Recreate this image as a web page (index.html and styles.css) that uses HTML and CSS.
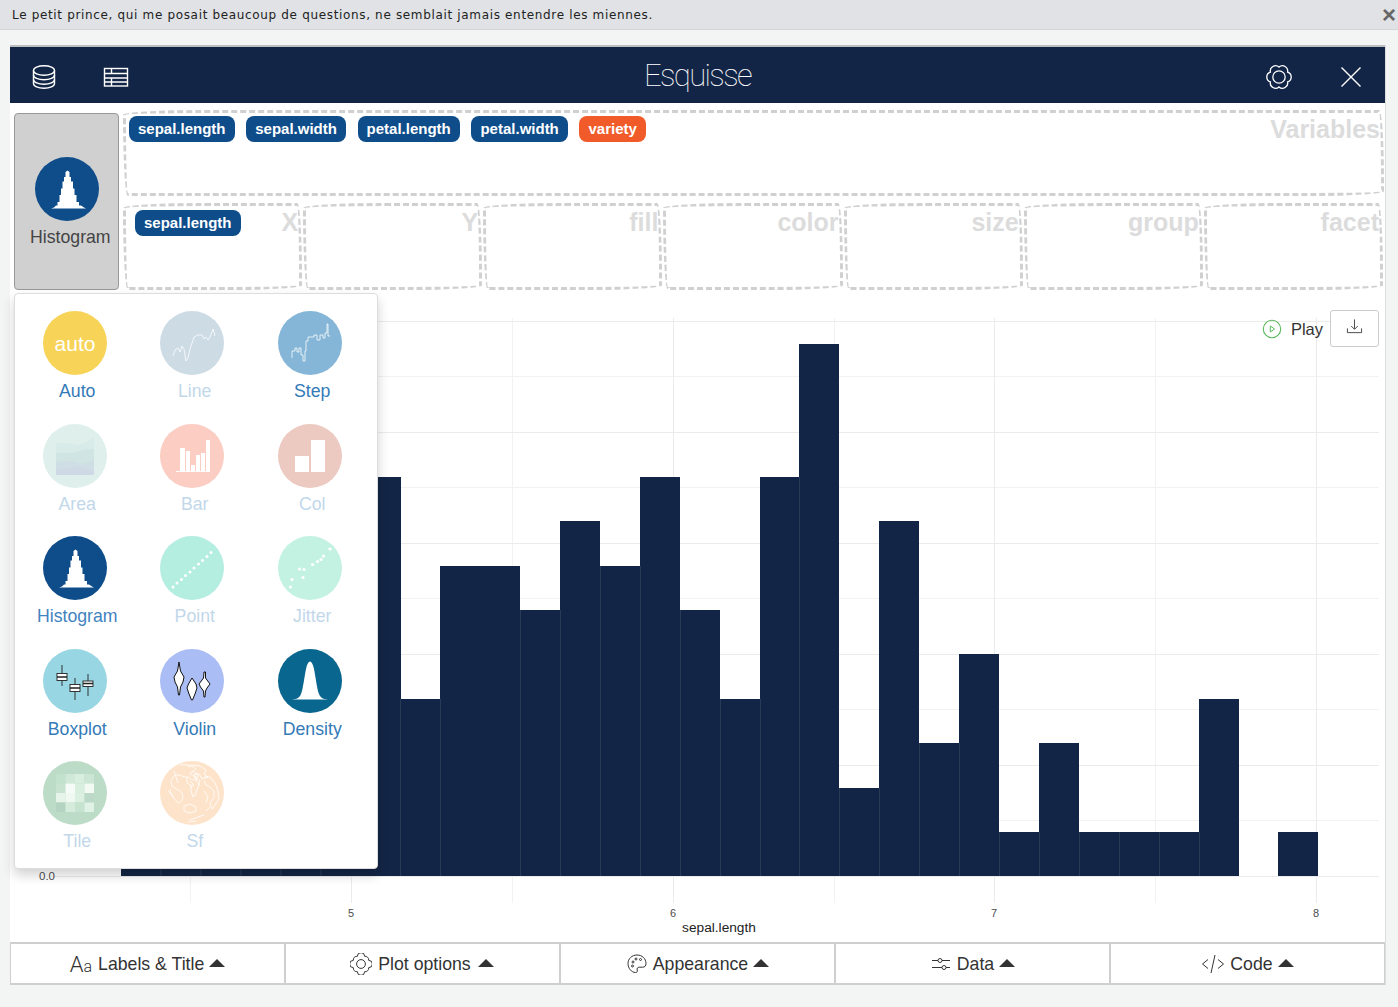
FILE: index.html
```html
<!DOCTYPE html>
<html lang="en">
<head>
<meta charset="utf-8">
<title>Esquisse</title>
<link rel="stylesheet" href="styles.css">
</head>
<body>
<div class="notice"><span class="notice-text">Le petit prince, qui me posait beaucoup de questions, ne semblait jamais entendre les miennes.</span><span class="notice-close">×</span></div>
<main class="frame">
  <header class="topbar">
    <div class="topbar-left">
      <svg class="ticon" viewBox="0 0 26 26"><g fill="none" stroke="#fff" stroke-width="1.4"><ellipse cx="13" cy="6.5" rx="10.5" ry="4.8"/><path d="M2.5 6.5v13c0 2.8 4.7 4.8 10.5 4.8s10.500-2 10.500-4.800v-13"/><path d="M2.500 11c0 2.800 4.700 4.800 10.500 4.800s10.500-2 10.500-4.800"/><path d="M2.500 15.500c0 2.800 4.700 4.800 10.500 4.800s10.500-2 10.500-4.800"/></g></svg>
      <svg class="ticon" viewBox="0 0 26 26"><g fill="none" stroke="#fff" stroke-width="1.400"><rect x="1.500" y="4.500" width="23" height="17.500"/><path d="M1.500 9.500h23M1.500 14h23M8.500 14v8M8.500 4.500v5M1.500 18h23"/></g></svg>
    </div>
    <h1 class="brand">Esquisse</h1>
    <div class="topbar-right">
      <svg class="ticon" viewBox="2.500 2.500 21 21"><g fill="none" stroke="#fff" stroke-width="1.050"><path d="M19.930 9A4.200 4.200 0 0 1 19.930 17A4.200 4.200 0 0 1 13 21A4.200 4.200 0 0 1 6.070 17A4.200 4.200 0 0 1 6.070 9A4.200 4.200 0 0 1 13 5A4.200 4.200 0 0 1 19.930 9Z"/><circle cx="13" cy="13" r="5"/></g></svg>
      <svg class="ticon" viewBox="0 0 26 26"><path d="M3.500 3.500l19 19M22.500 3.500l-19 19" fill="none" stroke="#fff" stroke-width="1.400"/></svg>
    </div>
  </header>

  <section class="drops">
    <button class="geom-btn" type="button">
      <svg class="disc" viewBox="0 0 64 64"><circle cx="32" cy="32" r="32" fill="#0e4c8a"/><path class="white" d="M16 51.500 19 50.500 21 48.500H22.500V45H24.500V38H26V31.500H27.500V24.500H29V20H30.500V15L32.500 13.500 34.500 15V20H36V24.500H38V31.500H39.500V38H41.500V45H44V48.500H46L49 50.500 51 51.500Z"/></svg>
      <span class="geom-btn-label">Histogram</span>
    </button>
    <div class="zones">
      <div class="zone zone-vars">
        <div class="pills">
          <span class="pill">sepal.length</span><span class="pill">sepal.width</span><span class="pill">petal.length</span><span class="pill">petal.width</span><span class="pill pill-orange">variety</span>
        </div>
        <span class="zone-label">Variables</span>
      </div>
      <div class="zone-row">
        <div class="zone zone-first"><div class="pills"><span class="pill">sepal.length</span></div><span class="zone-label">X</span></div>
        <div class="zone"><span class="zone-label">Y</span></div>
        <div class="zone"><span class="zone-label">fill</span></div>
        <div class="zone"><span class="zone-label">color</span></div>
        <div class="zone"><span class="zone-label">size</span></div>
        <div class="zone"><span class="zone-label">group</span></div>
        <div class="zone"><span class="zone-label">facet</span></div>
      </div>
    </div>
  </section>

  <section class="plot">
    <svg class="plot-svg" viewBox="10 292 1375 650">
      <g class="grid-minor"><path d="M52 376.500H1379M52 487.500H1379M52 598.500H1379M52 709.500H1379M52 820.500H1379M190.500 318V903M512.500 318V903M834.500 318V903M1155.500 318V903"/></g>
      <g class="grid-major"><path d="M52 321.500H1379M52 432.500H1379M52 543.500H1379M52 654.500H1379M52 765.500H1379M52 876.500H1379M351.500 318V903M673.500 318V903M994.500 318V903M1316.500 318V903"/></g>
      <g class="bars">
        <rect x="121" y="860" width="240" height="16"/>
        <rect x="360" y="477" width="41" height="399"/>
        <rect x="400" y="699" width="41" height="177"/>
        <rect x="440" y="566" width="80" height="310"/>
        <rect x="520" y="610" width="40" height="266"/>
        <rect x="560" y="521" width="40" height="355"/>
        <rect x="600" y="566" width="40" height="310"/>
        <rect x="640" y="477" width="40" height="399"/>
        <rect x="680" y="610" width="40" height="266"/>
        <rect x="720" y="699" width="40" height="177"/>
        <rect x="760" y="477" width="40" height="399"/>
        <rect x="799" y="344" width="40" height="532"/>
        <rect x="839" y="788" width="41" height="88"/>
        <rect x="879" y="521" width="40" height="355"/>
        <rect x="919" y="743" width="40" height="133"/>
        <rect x="959" y="654" width="40" height="222"/>
        <rect x="999" y="832" width="40" height="44"/>
        <rect x="1039" y="743" width="40" height="133"/>
        <rect x="1079" y="832" width="120" height="44"/>
        <rect x="1199" y="699" width="40" height="177"/>
        <rect x="1278" y="832" width="40" height="44"/>
      </g>
      <path class="bar-seams" d="M161 860V876M201 860V876M241 860V876M281 860V876M321 860V876M400.500 699V876M440.500 699V876M520.500 610V876M560.500 610V876M600.500 566V876M640.500 566V876M680.500 610V876M720.500 699V876M760.500 699V876M799.500 477V876M839.500 788V876M879.500 788V876M919.500 743V876M959.500 743V876M999.500 832V876M1039.500 832V876M1079.500 832V876M1119.500 832V876M1159.500 832V876M1199.500 832V876"/>
      <g class="ticks">
        <text class="tick-y" x="47" y="880" text-anchor="middle">0.0</text>
        <text x="351" y="917" text-anchor="middle">5</text>
        <text x="673" y="917" text-anchor="middle">6</text>
        <text x="994" y="917" text-anchor="middle">7</text>
        <text x="1316" y="917" text-anchor="middle">8</text>
      </g>
      <text class="axis-title" x="719" y="932" text-anchor="middle">sepal.length</text>
    </svg>
    <div class="plot-controls">
      <svg class="play-icon" viewBox="0 0 20 20"><circle cx="10" cy="10" r="8.700" fill="none" stroke="#5cb85c" stroke-width="1.100"/><path d="M8.300 7v6l4.200-3z" fill="none" stroke="#5cb85c" stroke-width="1"/></svg>
      <span class="play-label">Play</span>
      <button class="dl-btn" type="button"><svg class="dl-icon" viewBox="0 0 18 18"><path d="M9 1.500v10M5.500 8.500 9 12l3.500-3.500M1.500 11v4.500h15V11" fill="none" stroke="#444" stroke-width="1"/></svg></button>
    </div>
  </section>

  <nav class="tabs">
    <button class="tab" type="button"><span class="aa"><span class="aa-big">A</span><span class="aa-small">a</span></span>Labels &amp; Title<i class="caret"></i></button>
    <button class="tab" type="button"><svg class="tab-icon tab-icon-gear" viewBox="1 1 20 20"><g fill="none" stroke="#333" stroke-width=".9"><path d="M18 7.700A3.300 3.300 0 0 1 18 14.300A3.300 3.300 0 0 1 14.300 18A3.300 3.300 0 0 1 7.700 18A3.300 3.300 0 0 1 4 14.300A3.300 3.300 0 0 1 4 7.700A3.300 3.300 0 0 1 7.700 4A3.300 3.300 0 0 1 14.300 4A3.300 3.300 0 0 1 18 7.700Z"/><circle cx="11" cy="11" r="4"/></g></svg>Plot options<i class="caret caret-wide"></i></button>
    <button class="tab" type="button"><svg class="tab-icon" viewBox="0 0 22 22"><g fill="none" stroke="#333" stroke-width="1"><path d="M11 2C5.800 2 2 5.800 2 10.500S5.500 19.500 9.500 19.500c1.800 0 2.200-1.200 1.700-2.500-.5-1.500.3-2.800 2-2.800h3.300c2.500 0 3.500-1.500 3.500-3.700C20 5.500 16 2 11 2Z"/><circle cx="7" cy="9" r="1"/><circle cx="10" cy="6" r="1"/><circle cx="14.500" cy="6.500" r="1"/><circle cx="6.500" cy="13" r="1"/></g></svg>Appearance<i class="caret"></i></button>
    <button class="tab" type="button"><svg class="tab-icon" viewBox="0 0 22 22"><g fill="none" stroke="#333" stroke-width="1"><path d="M2 7.500h6M12 7.500h8M2 14.500h10M16 14.500h4"/><circle cx="10" cy="7.500" r="2"/><circle cx="14" cy="14.500" r="2"/></g></svg>Data<i class="caret"></i></button>
    <button class="tab" type="button"><svg class="tab-icon tab-icon-wide" viewBox="0 0 24 22"><path d="M7 6.500 1.500 11 7 15.500M17 6.500 22.500 11 17 15.500M14 2 10 20" fill="none" stroke="#333" stroke-width="1"/></svg>Code<i class="caret"></i></button>
  </nav>

  <div class="picker">
    <div class="geom"><svg class="disc" viewBox="0 0 64 64"><circle cx="32" cy="32" r="32" fill="#f7d358"/><text class="disc-auto" x="32" y="39.500" text-anchor="middle">auto</text></svg><span class="geom-label">Auto</span></div>
    <div class="geom off"><svg class="disc" viewBox="0 0 64 64"><circle cx="32" cy="32" r="32" fill="#cddbe5"/><path class="trace" d="M13 45 15 39 18 37 20 41 22 35 24 38 26 50 28 47 30 38 32 32 34 26 38 24 42 24 44 28 46 26 48 29 50 26 53 18 55 24 54 25"/></svg><span class="geom-label">Line</span></div>
    <div class="geom"><svg class="disc" viewBox="0 0 64 64"><circle cx="32" cy="32" r="32" fill="#85b6d7"/><path class="trace" d="M14 47V40H17V37H19V41H21V37H23V44H25V50H27V40H28V30H30V26H36V24H39V29H42V24H45V27H47V22H49V13H50V25H52"/></svg><span class="geom-label">Step</span></div>
    <div class="geom off"><svg class="disc" viewBox="0 0 64 64"><circle cx="32" cy="32" r="32" fill="#dff0ec"/><path fill="#d8ebe8" d="M13 19 24 19 36 21 44 18 51 13V51H13Z"/><path fill="#d0e5e3" d="M13 29 28 29 40 26 51 25V51H13Z"/><path fill="#cfdde4" d="M13 38 28 37 40 40 51 36V51H13Z"/><path fill="#cfd9e6" d="M13 46 24 44 36 43 51 47V51H13Z"/></svg><span class="geom-label">Area</span></div>
    <div class="geom off"><svg class="disc" viewBox="0 0 64 64"><circle cx="32" cy="32" r="32" fill="#fbcdc3"/><path class="white" d="M16 47H20V24H25V47H26V27H30V47H31V41H35V47H36V31H40V47H41V29H45V47H46V16H50V48H16Z"/></svg><span class="geom-label">Bar</span></div>
    <div class="geom off"><svg class="disc" viewBox="0 0 64 64"><circle cx="32" cy="32" r="32" fill="#eccac1"/><rect class="white" x="17" y="32" width="14" height="16"/><rect class="white" x="33" y="16" width="14" height="32"/></svg><span class="geom-label">Col</span></div>
    <div class="geom on-strong"><svg class="disc" viewBox="0 0 64 64"><circle cx="32" cy="32" r="32" fill="#0e4c8a"/><path class="white" d="M16 51.500 19 50.500 21 48.500H22.500V45H24.500V38H26V31.500H27.500V24.500H29V20H30.500V15L32.500 13.500 34.500 15V20H36V24.500H38V31.500H39.500V38H41.500V45H44V48.500H46L49 50.500 51 51.500Z"/></svg><span class="geom-label">Histogram</span></div>
    <div class="geom off"><svg class="disc" viewBox="0 0 64 64"><circle cx="32" cy="32" r="32" fill="#b4eee0"/><g class="white"><circle cx="13" cy="51" r="1.500"/><circle cx="17" cy="47" r="1.500"/><circle cx="21.500" cy="43.500" r="1.500"/><circle cx="25.500" cy="39.500" r="1.500"/><circle cx="30" cy="36" r="1.500"/><circle cx="34" cy="32" r="1.500"/><circle cx="38.500" cy="28" r="1.500"/><circle cx="42.500" cy="24.500" r="1.500"/><circle cx="47" cy="20.500" r="1.500"/><circle cx="51" cy="16.500" r="1.500"/></g></svg><span class="geom-label">Point</span></div>
    <div class="geom off"><svg class="disc" viewBox="0 0 64 64"><circle cx="32" cy="32" r="32" fill="#c4f2e2"/><g class="white"><circle cx="12.500" cy="51" r="1.600"/><circle cx="14" cy="43.500" r="1.600"/><circle cx="25" cy="41.500" r="1.600"/><circle cx="21.500" cy="33" r="1.600"/><circle cx="26" cy="33.500" r="1.600"/><circle cx="34.500" cy="28.500" r="1.600"/><circle cx="39.500" cy="25.500" r="1.600"/><circle cx="43" cy="23.500" r="1.600"/><circle cx="45.500" cy="20" r="1.600"/><circle cx="52" cy="13" r="1.600"/></g></svg><span class="geom-label">Jitter</span></div>
    <div class="geom"><svg class="disc" viewBox="0 0 64 64"><circle cx="32" cy="32" r="32" fill="#97d6e2"/><g stroke="#222" stroke-width=".9" fill="#fff"><path d="M19 16V37M32 29V51M45 25V47"/><rect x="14" y="24.500" width="10" height="7"/><rect x="27" y="35.500" width="10" height="7"/><rect x="40" y="32" width="10" height="5.500"/></g><path d="M14 28h10M27 39h10M40 34.500h10" stroke="#222" stroke-width="1.600"/></svg><span class="geom-label">Boxplot</span></div>
    <div class="geom"><svg class="disc" viewBox="0 0 64 64"><circle cx="32" cy="32" r="32" fill="#abbdf5"/><g fill="#fff" stroke="#111" stroke-width="1"><path d="M19 13 20.500 22 24 28 23 33 20.500 38 19.500 46H18.500L17.500 38 15 33 14 28 17.500 22Z"/><path d="M32 29 36 35 37 39 35 45 32.500 51H31.500L29 45 27 39 28.500 35Z"/><path d="M44 23H45.500L45.500 29 50 35 47 39 45.500 42 45 48H44L43.500 42 40.500 38 39 35 43.500 29Z"/></g></svg><span class="geom-label">Violin</span></div>
    <div class="geom"><svg class="disc" viewBox="0 0 64 64"><circle cx="32" cy="32" r="32" fill="#08668f"/><path class="white" d="M12 50.500C17 50.500 21 50 23 45 25 40 26 30 28 20 29 15 30.500 12.500 32 12.500S35 15 36 20C38 30 39 40 41 45 43 50 47 50.500 52 50.500Z"/></svg><span class="geom-label">Density</span></div>
    <div class="geom off"><svg class="disc" viewBox="0 0 64 64"><circle cx="32" cy="32" r="32" fill="#bddcc8"/><rect x="13" y="13" width="9.500" height="9.500" fill="#c3e2cd"/><rect x="22.500" y="13" width="9.500" height="9.500" fill="#cfe8d7"/><rect x="32" y="13" width="9.500" height="9.500" fill="#d8eedf"/><rect x="41.500" y="13" width="9.500" height="9.500" fill="#cbe6d3"/><rect x="13" y="22.500" width="9.500" height="9.500" fill="#c8e4d1"/><rect x="22.500" y="22.500" width="9.500" height="9.500" fill="#f5fbf6"/><rect x="32" y="22.500" width="9.500" height="9.500" fill="#d8eedf"/><rect x="41.500" y="22.500" width="9.500" height="9.500" fill="#f3faf4"/><rect x="13" y="32" width="9.500" height="9.500" fill="#e6f4ea"/><rect x="22.500" y="32" width="9.500" height="9.500" fill="#f0f8f2"/><rect x="32" y="32" width="9.500" height="9.500" fill="#dbf0e1"/><rect x="41.500" y="32" width="9.500" height="9.500" fill="#bcd9c7"/><rect x="13" y="41.500" width="9.500" height="9.500" fill="#b4d3c1"/><rect x="22.500" y="41.500" width="9.500" height="9.500" fill="#d5ebdc"/><rect x="32" y="41.500" width="9.500" height="9.500" fill="#c5e3cf"/><rect x="41.500" y="41.500" width="9.500" height="9.500" fill="#e0f2e5"/></svg><span class="geom-label">Tile</span></div>
    <div class="geom off"><svg class="disc" viewBox="0 0 64 64"><circle cx="32" cy="32" r="32" fill="#fee3cb"/><g fill="none" stroke="#fff" stroke-width=".8"><path d="M20 4C26 3 34 5 36 8 34 11 30 10 30 13 34 15 36 14 36 18 33 20 30 18 28 16 24 17 20 13 16 14 12 16 10 20 12 25 15 28 20 29 22 32 24 36 22 40 19 42 15 40 11 34 10 28"/><path d="M28 6 32 4 40 5 46 9 44 13 48 16 42 18 40 14 36 12 34 16 40 20 38 26 35 34 33 36 31 30 31 24 27 22 27 16"/><path d="M44 16 50 16 55 22 58 30 59 38 55 44 52 48 50 42 54 36 54 30 50 26 46 24 44 20"/><path d="M24 45 30 43 36 46 36 50 30 52 24 50Z"/><path d="M30 59 38 56 44 54M28 61 36 60M46 50 50 46"/><path d="M14 10 18 22M44 30 48 36 46 42M8 30 14 36M32 10 38 14 36 20 40 24M30 20 34 24 30 26"/></g></svg><span class="geom-label">Sf</span></div>
  </div>
</main>
</body>
</html>
```
FILE: styles.css
```css
* { box-sizing: border-box; }
html, body { margin: 0; height: 1007px; overflow: hidden; }
body { background: #f3f5f5; font-family: "Liberation Sans", Arial, sans-serif; color: #333; }

.notice {
  height: 30px;
  background: #e0e2e6;
  border-bottom: 1px solid #d2d4d6;
  display: flex;
  justify-content: space-between;
  align-items: center;
  padding: 0 2px 0 12px;
}
.notice-text { font-family: "DejaVu Sans", sans-serif; font-size: 12px; letter-spacing: .66px; color: #222; }
.notice-close { font-weight: bold; font-size: 24px; line-height: 1; color: #666; }

.frame {
  position: relative;
  margin: 15px 13px 0 10px;
  height: 940px;
  background: #fff;
  border-top: 2px solid #bcbebe;
  box-shadow: 1px 0 0 #ddd;
  display: flex;
  flex-direction: column;
}

.topbar {
  height: 56px;
  flex: none;
  background: #132546;
  display: flex;
  justify-content: space-between;
  align-items: center;
  padding: 4px 21px 0;
  position: relative;
}
.topbar-left, .topbar-right { display: flex; gap: 46px; align-items: center; }
.ticon { width: 26px; height: 26px; display: block; }
.brand {
  margin: 0 0 2px;
  flex: 1;
  text-align: center;
  color: #fff;
  font-family: "Roboto", sans-serif;
  font-weight: 100;
  font-size: 31px;
  line-height: 50px;
  letter-spacing: -1.600px;
}

.drops { height: 189px; flex: none; display: flex; padding: 7px 1px 2px 4px; gap: 4px; }
.geom-btn {
  width: 105px;
  height: 177px;
  margin-top: 3px;
  flex: none;
  background: #d0d0d0;
  border: 1px solid #999;
  border-radius: 4px;
  padding: 43px 0 0;
  display: flex;
  flex-direction: column;
  align-items: flex-start;
  font-family: inherit;
}
.geom-btn .disc { margin-left: 19.500px; }
.geom-btn-label { font-size: 17.7px; color: #444; line-height: 20px; margin: 6px 0 0 15px; }

.disc { width: 64px; height: 64px; display: block; flex: none; }
.white { fill: #fff; }
.trace { fill: none; stroke: #fff; stroke-width: .9; opacity: .85; }
.disc-auto { font-family: "Liberation Sans", sans-serif; font-size: 21px; fill: #fff; }

.zones { flex: 1; display: flex; flex-direction: column; gap: 7px; min-width: 0; }
.zone {
  position: relative;
  border: 3px dashed #d0d0d0;
  border-radius: 255px 15px 225px 15px / 15px 225px 15px 255px;
  display: flex;
  justify-content: space-between;
  align-items: flex-start;
  min-width: 0;
  background: #fff;
}
.zone-vars { height: 86px; padding: 3px 1px 0 3px; }
.zone-row { display: grid; grid-template-columns: repeat(7, 1fr); height: 87px; }
.zone-row .zone { padding: 3px 1px 0 2px; margin-right: 1px; }
.zone-first { padding-left: 9px !important; }
.zone-first .pills { padding-top: 1px; }
.zone-label { font-weight: bold; font-size: 25px; line-height: 28px; color: #dcdcdc; margin: -1px 0 0 auto; }
.pills { display: flex; gap: 11.700px; }
.pill {
  height: 26px;
  padding: 0 9px;
  border-radius: 8px;
  background: #0e4c8a;
  color: #fff;
  font-size: 15px;
  font-weight: bold;
  line-height: 26px;
  white-space: nowrap;
}
.pill-orange { background: #f15a29; }

.plot { position: relative; flex: 1; min-height: 0; }
.plot-svg { display: block; width: 1375px; height: 650px; }
.grid-minor path { fill: none; stroke: #f2f2f2; stroke-width: 1; }
.grid-major path { fill: none; stroke: #ebebeb; stroke-width: 1; }
.bars rect { fill: #132546; }
.bar-seams { fill: none; stroke: #34435f; stroke-width: .7; }
.ticks text { font-size: 11px; fill: #4d4d4d; }
.ticks .tick-y { font-size: 11.500px; }
.axis-title { font-size: 13.700px; fill: #222; }

.plot-controls { position: absolute; top: 18px; right: 6px; display: flex; align-items: center; }
.play-icon { width: 20px; height: 20px; margin-right: 8px; }
.play-label { font-size: 16.500px; color: #333; margin: 2px 7px 0 1px; }
.dl-btn { width: 49px; height: 37px; background: #fff; border: 1px solid #ccc; border-radius: 3px; padding: 0; display: flex; align-items: center; justify-content: center; }
.dl-icon { width: 17px; height: 17px; margin-top: -4px; }

.tabs { height: 43px; flex: none; display: grid; grid-template-columns: repeat(5, 1fr); }
.tab {
  background: #fff;
  border: 2px solid #cfcfcf;
  border-left-width: 1px;
  border-right-width: 1px;
  margin: 0;
  padding: 1px 0 0;
  font-family: inherit;
  font-size: 17.700px;
  color: #333;
  display: flex;
  align-items: center;
  justify-content: center;
}
.tab-icon { width: 22px; height: 22px; margin-right: 5px; flex: none; }
.tab-icon-gear { margin-left: -1px; margin-right: 6px; }
.tab-icon-wide { width: 24px; }
.aa { font-family: "Roboto", sans-serif; font-weight: 300; margin-right: 6px; white-space: nowrap; }
.aa-big { font-size: 22px; }
.aa-small { font-size: 16px; }
.caret {
  width: 0;
  height: 0;
  margin: 0 0 3px 5px;
  border-left: 8px solid transparent;
  border-right: 8px solid transparent;
  border-bottom: 8px solid #333;
}
.caret-wide { margin-left: 7px; }

.picker {
  position: absolute;
  left: 4px;
  top: 246px;
  width: 364px;
  height: 576px;
  background: #fff;
  border: 1px solid #ddd;
  border-radius: 4px;
  box-shadow: 0 6px 12px rgba(0,0,0,.18);
  display: grid;
  grid-template-columns: repeat(3, 117.500px);
  grid-auto-rows: 112.500px;
  padding: 17px 0 0 3.500px;
}
.geom { display: flex; flex-direction: column; align-items: center; }
.geom .disc { margin-right: 5px; }
.geom-label { font-size: 17.700px; line-height: 20px; margin-top: 6px; color: #337ab7; }
.on-strong .geom-label { color: #3f83c0; }
.off .geom-label { color: #c2d7ea; }
```
